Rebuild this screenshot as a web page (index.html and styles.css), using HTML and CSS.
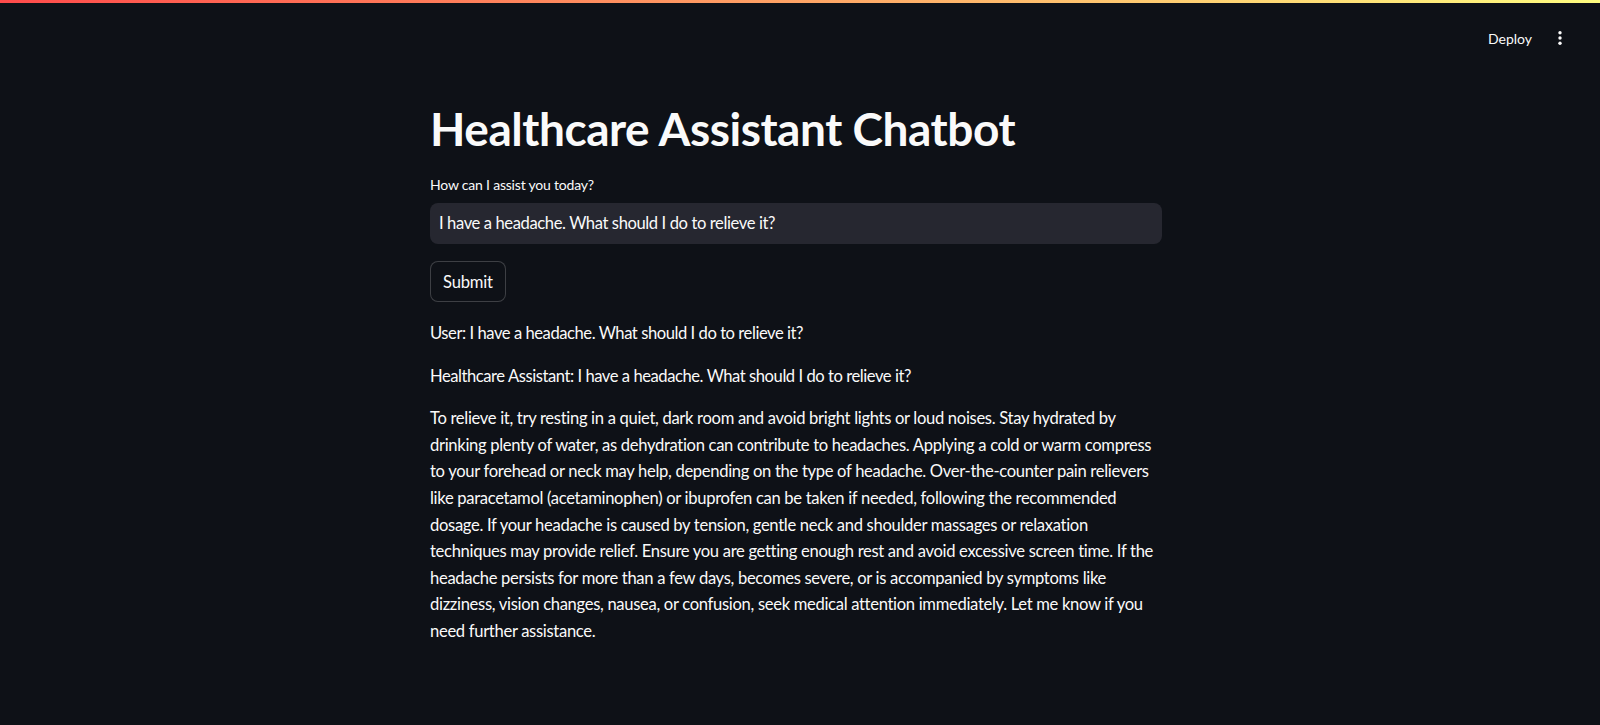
FILE: index.html
```html
<!DOCTYPE html>
<html lang="en">
<head>
<meta charset="utf-8">
<title>Healthcare Assistant Chatbot</title>
<link rel="stylesheet" href="styles.css">
</head>
<body>
<div class="decoration"></div>
<header class="header">
  <div class="toolbar">
    <button class="deploy">Deploy</button>
    <button class="menu" aria-label="Main menu">
      <svg width="16" height="16" viewBox="0 0 16 16"><circle cx="8" cy="2.8" r="1.7" fill="#fafafa"/><circle cx="8" cy="8" r="1.7" fill="#fafafa"/><circle cx="8" cy="13.2" r="1.7" fill="#fafafa"/></svg>
    </button>
  </div>
</header>
<main class="main">
  <div class="block">
    <h1 class="title">Healthcare Assistant Chatbot</h1>
    <div class="field">
      <label class="label">How can I assist you today?</label>
      <div class="input">I have a headache. What should I do to relieve it?</div>
    </div>
    <div class="btn-row"><button class="submit">Submit</button></div>
    <p class="msg">User: I have a headache. What should I do to relieve it?</p>
    <p class="msg">Healthcare Assistant: I have a headache. What should I do to relieve it?</p>
    <p class="msg answer">To relieve it, try resting in a quiet, dark room and avoid bright lights or loud noises. Stay hydrated by drinking plenty of water, as dehydration can contribute to headaches. Applying a cold or warm compress to your forehead or neck may help, depending on the type of headache. Over-the-counter pain relievers like paracetamol (acetaminophen) or ibuprofen can be taken if needed, following the recommended dosage. If your headache is caused by tension, gentle neck and shoulder massages or relaxation techniques may provide relief. Ensure you are getting enough rest and avoid excessive screen time. If the headache persists for more than a few days, becomes severe, or is accompanied by symptoms like dizziness, vision changes, nausea, or confusion, seek medical attention immediately. Let me know if you need further assistance.</p>
  </div>
</main>
</body>
</html>
```
FILE: styles.css
```css
* { box-sizing: border-box; }
html, body {
  margin: 0;
  padding: 0;
  background: #0e1117;
  color: #fafafa;
  font-family: "Lato", "Liberation Sans", sans-serif;
  height: 100%;
  overflow: hidden;
}
.decoration {
  height: 3px;
  background: linear-gradient(90deg, #ff4b4b, #fffd80);
}
.header {
  height: 57px;
  display: flex;
  justify-content: flex-end;
  align-items: flex-start;
}
.toolbar {
  display: flex;
  align-items: center;
  gap: 4px;
  padding: 19px 24px 0 0;
}
.deploy {
  background: transparent;
  border: none;
  color: #fafafa;
  font-family: inherit;
  font-size: 14px;
  padding: 0 8px;
  height: 32px;
}
.menu {
  background: transparent;
  border: none;
  width: 32px;
  height: 32px;
  display: flex;
  align-items: center;
  justify-content: center;
  padding: 0;
}
.main {
  display: flex;
  justify-content: center;
}
.block {
  width: 740px;
  margin-top: 38px;
  display: flex;
  flex-direction: column;
}
.title {
  margin: 0 0 15px;
  font-size: 46px;
  font-weight: 700;
  line-height: 62px;
  letter-spacing: -0.45px;
}
.field {
  display: flex;
  flex-direction: column;
  width: 732px;
}
.label {
  font-size: 14px;
  line-height: 20px;
  letter-spacing: -0.2px;
  margin-bottom: 8px;
}
.input {
  height: 41px;
  background: #262730;
  border-radius: 8px;
  padding: 0 9px;
  font-size: 16.6px;
  line-height: 41px;
  letter-spacing: -0.4px;
}
.submit {
  height: 41px;
  padding: 0 12px;
  background: #0e1117;
  color: #fafafa;
  border: 1px solid rgba(250, 250, 250, 0.2);
  border-radius: 8px;
  font-family: inherit;
  font-size: 16.6px;
  letter-spacing: -0.2px;
}
.btn-row {
  margin-top: 17px;
  margin-bottom: 18px;
}
.msg {
  margin: 0 0 16px;
  font-size: 16.6px;
  line-height: 26.6px;
  letter-spacing: -0.45px;
}
.answer {
  letter-spacing: -0.32px;
  width: 738px;
}
```
